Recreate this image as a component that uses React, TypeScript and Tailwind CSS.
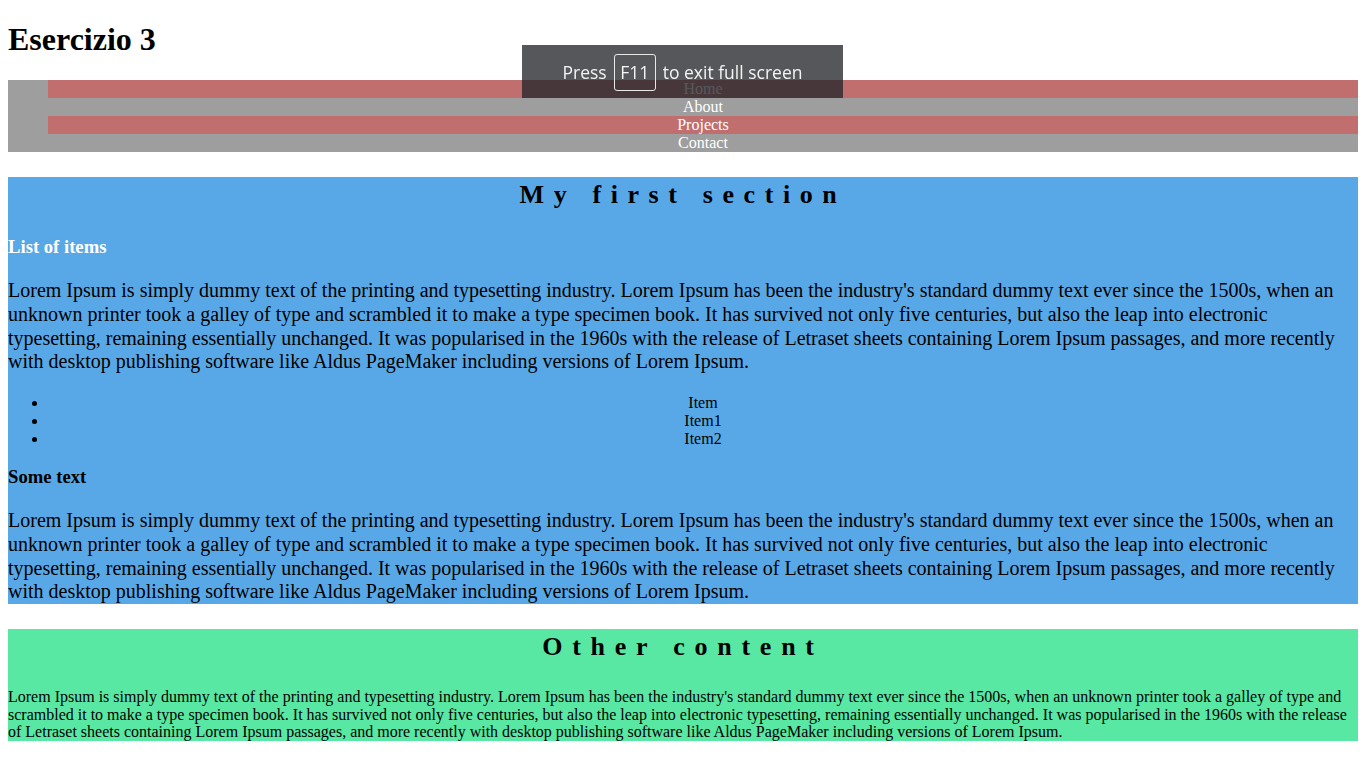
import React from "react";

const lorem =
  "Lorem Ipsum is simply dummy text of the printing and typesetting industry. Lorem Ipsum has been the industry's standard dummy text ever since the 1500s, when an unknown printer took a galley of type and scrambled it to make a type specimen book. It has survived not only five centuries, but also the leap into electronic typesetting, remaining essentially unchanged. It was popularised in the 1960s with the release of Letraset sheets containing Lorem Ipsum passages, and more recently with desktop publishing software like Aldus PageMaker including versions of Lorem Ipsum.";

export default function App() {
  return (
    <div className="min-h-[768px] bg-white text-black px-2 font-['Liberation_Serif','Times_New_Roman',serif]">
      <h1 className="pt-[21px] text-[32px] font-bold leading-[37px]">Esercizio 3</h1>

      <ul className="mt-[22px] bg-[#9e9e9e] pl-10 text-center text-[16px] leading-[18px] text-white">
        <li className="bg-[#c06e6e]">Home</li>
        <li>About</li>
        <li className="bg-[#c06e6e]">Projects</li>
        <li>Contact</li>
      </ul>

      <section className="mt-[25px] bg-[#58a8e8]">
        <h2 className="pt-[1px] text-center text-[26px] font-bold leading-[34px] tracking-[9.6px]">My first section</h2>
        <h4 className="mt-[24px] text-[18.67px] font-bold leading-[21px] text-white">List of items</h4>
        <p className="mt-[22px] text-[20px] leading-[23.75px]">{lorem}</p>
        <ul className="mt-[20px] list-disc pl-10 text-center text-[16px] leading-[18px]">
          <li>Item</li>
          <li>Item1</li>
          <li>Item2</li>
        </ul>
        <h4 className="mt-[18px] text-[18.67px] font-bold leading-[21px]">Some text</h4>
        <p className="mt-[22px] text-[20px] leading-[23.75px]">{lorem}</p>
      </section>

      <section className="mt-[25px] bg-[#58e8a4]">
        <h2 className="pt-[1px] text-center text-[26px] font-bold leading-[34px] tracking-[9.75px]">Other content</h2>
        <p className="mt-[24px] text-[16px] leading-[17.67px]">{lorem}</p>
      </section>

      <div className="fixed left-[522px] top-[45px] flex h-[53px] w-[321px] items-center justify-center gap-[7px] bg-[rgba(38,40,44,0.78)] pt-[1px] font-['Open_Sans','Noto_Sans',sans-serif] text-[17.5px] text-[#f4f4f4]">
        <span>Press</span>
        <span className="flex h-[37px] w-[42px] items-center justify-center rounded-[3px] border border-[#e8e8e8]">F11</span>
        <span>to exit full screen</span>
      </div>
    </div>
  );
}
